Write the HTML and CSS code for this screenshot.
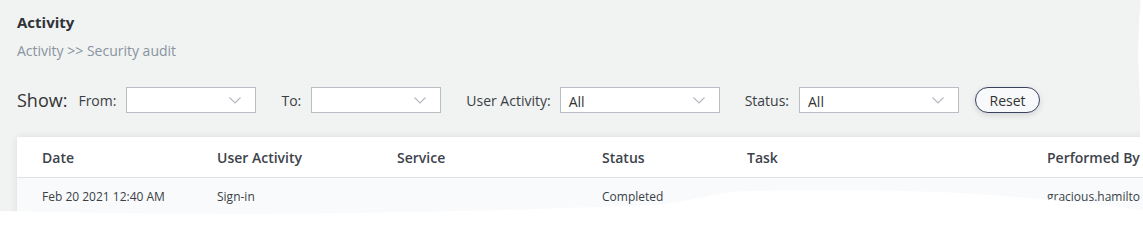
FILE: index.html
```html
<!DOCTYPE html>
<html>
<head>
<meta charset="utf-8">
<link rel="stylesheet" href="styles.css">
</head>
<body>
<div class="frame">
  <div class="page">
    <h1 class="title">Activity</h1>
    <div class="crumbs">Activity &gt;&gt; Security audit</div>
    <div class="filters">
      <span class="show">Show:</span>
      <span class="lbl lbl-first">From:</span>
      <div class="sel w130"><span class="val"></span><svg class="chev" viewBox="0 0 12 7"><polyline points="0.5,0.5 6,6 11.5,0.5"/></svg></div>
      <span class="lbl">To:</span>
      <div class="sel w130"><span class="val"></span><svg class="chev" viewBox="0 0 12 7"><polyline points="0.5,0.5 6,6 11.5,0.5"/></svg></div>
      <span class="lbl lbl-tight">User Activity:</span>
      <div class="sel w160"><span class="val">All</span><svg class="chev" viewBox="0 0 12 7"><polyline points="0.5,0.5 6,6 11.5,0.5"/></svg></div>
      <span class="lbl">Status:</span>
      <div class="sel w160"><span class="val">All</span><svg class="chev" viewBox="0 0 12 7"><polyline points="0.5,0.5 6,6 11.5,0.5"/></svg></div>
      <button class="reset">Reset</button>
    </div>
    <div class="card">
      <div class="row head">
        <div>Date</div><div>User Activity</div><div>Service</div><div>Status</div><div>Task</div><div>Performed By</div>
      </div>
      <div class="row data">
        <div>Feb 20 2021 12:40 AM</div><div>Sign-in</div><div></div><div>Completed</div><div>Password changed</div><div>gracious.hamilto</div>
      </div>
    </div>
  </div>
  <svg class="tear-bottom" viewBox="0 180 1143 48" preserveAspectRatio="none"><path d="M0 211 C 200 216, 450 214, 665 204 C 695 200, 715 192, 745 191 C 800 190.5, 880 189, 960 193 C 1040 198, 1100 204, 1143 210 L1143 228 L0 228 Z"/></svg>
  <svg class="tear-right" viewBox="0 0 6 137" preserveAspectRatio="none"><path d="M6 0 L3.5 0 Q 0 40 2 80 Q 3.5 110 3 137 L6 137 Z"/></svg>
</div>
</body>
</html>
```
FILE: styles.css
```css
body {
  margin: 0;
  padding: 0;
  background: #fff;
  font-family: "Open Sans", "Noto Sans", sans-serif;
  color: #333;
}
.frame {
  position: relative;
  width: 1143px;
  height: 228px;
  overflow: hidden;
  background: #f1f2f2;
}
.page {
  padding: 12px 0 0 17px;
}
.title {
  margin: 0;
  font-size: 15px;
  font-weight: 700;
  line-height: 20px;
  color: #2f3337;
}
.crumbs {
  margin-top: 9px;
  font-size: 14px;
  line-height: 20px;
  color: #8894a0;
}
.filters {
  margin-top: 26px;
  display: flex;
  align-items: center;
  height: 26px;
}
.show {
  font-size: 18px;
  color: #333;
  margin-right: 11px;
}
.lbl {
  font-size: 14px;
  color: #3a3f44;
  margin-right: 10px;
  margin-left: 25px;
}
.lbl-first { margin-left: 0; }
.lbl-tight { margin-right: 9px; }
.sel {
  box-sizing: border-box;
  height: 26px;
  background: #fff;
  border: 1px solid #b9bdc4;
  display: flex;
  align-items: center;
  justify-content: space-between;
  padding: 0 14px 0 8px;
}
.w130 { width: 130px; }
.w160 { width: 160px; }
.val {
  font-size: 14px;
  color: #333;
  padding-top: 2px;
}
.chev {
  width: 12px;
  height: 7px;
  fill: none;
  stroke: #b4b8be;
  stroke-width: 1.2;
}
.reset {
  margin-left: 16px;
  box-sizing: border-box;
  width: 65px;
  height: 26px;
  border: 1px solid #3c4160;
  border-radius: 13px;
  background: #f8f9fa;
  font-family: inherit;
  font-size: 14px;
  color: #333;
  padding: 0;
  box-shadow: 0 2px 6px rgba(0,0,0,0.12);
}
.card {
  margin-top: 24px;
  width: 1200px;
  background: #fff;
  box-shadow: 0 0 8px rgba(0,0,0,0.09);
}
.row {
  display: grid;
  grid-template-columns: 175px 180px 205px 145px 300px 1fr;
  padding-left: 25px;
  align-items: center;
  white-space: nowrap;
  overflow: hidden;
}
.head {
  height: 40px;
  border-bottom: 1px solid #dfe3e8;
  font-size: 14px;
  font-weight: 600;
  color: #3d434b;
}
.data {
  height: 36px;
  padding-bottom: 2px;
  background: #f8fafc;
  font-size: 12px;
  color: #3a3f45;
}
.tear-bottom {
  position: absolute;
  left: 0;
  top: 180px;
  width: 1143px;
  height: 48px;
  fill: #fff;
}
.tear-right {
  position: absolute;
  right: 0;
  top: 0;
  width: 6px;
  height: 137px;
  fill: #fff;
}
```
